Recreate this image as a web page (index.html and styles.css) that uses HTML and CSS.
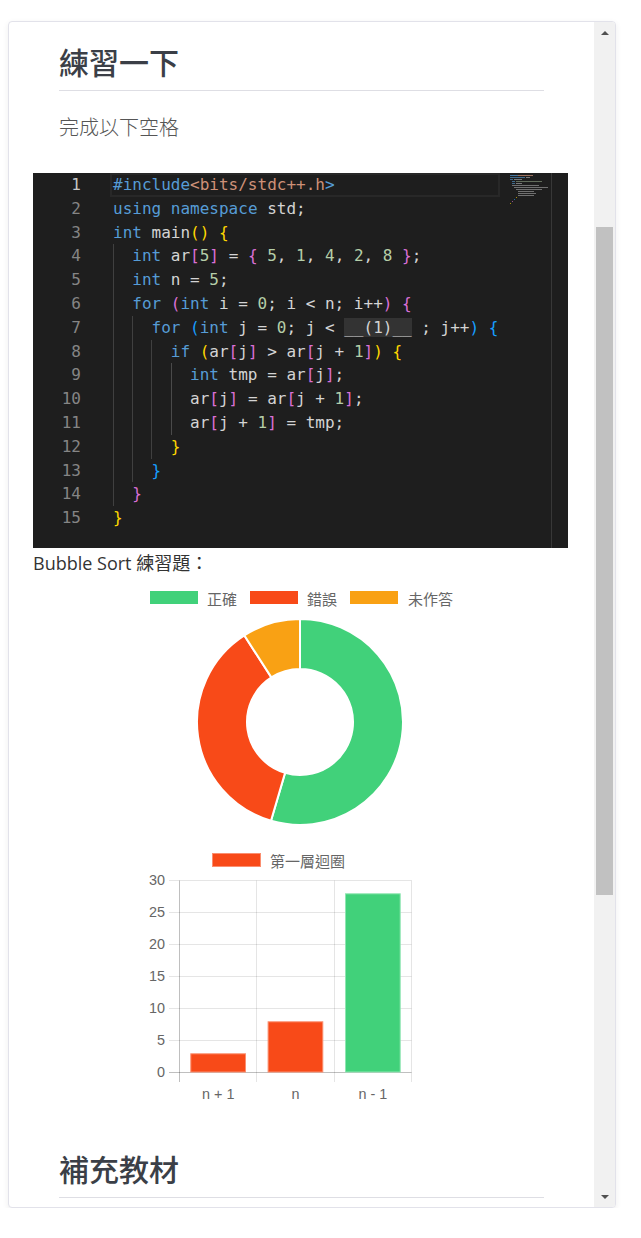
FILE: index.html
```html
<!DOCTYPE html>
<html lang="zh-Hant">
<head>
<meta charset="utf-8">
<title>練習一下</title>
<link rel="stylesheet" href="styles.css">
</head>
<body>
<div class="card">
  <section class="content">
    <h2 class="title">練習一下</h2>
    <p class="lead">完成以下空格</p>
    <div class="wide">
      <div class="editor">
        <div class="gutter">
          <div class="num active">1</div>
          <div class="num">2</div>
          <div class="num">3</div>
          <div class="num">4</div>
          <div class="num">5</div>
          <div class="num">6</div>
          <div class="num">7</div>
          <div class="num">8</div>
          <div class="num">9</div>
          <div class="num">10</div>
          <div class="num">11</div>
          <div class="num">12</div>
          <div class="num">13</div>
          <div class="num">14</div>
          <div class="num">15</div>
        </div>
        <div class="code">
          <div class="cur-line"></div>
          <div class="guide g1"></div>
          <div class="guide g2"></div>
          <div class="guide g3"></div>
          <div class="guide g4"></div>
          <div class="ln"><span class="k">#include</span><span class="s">&lt;bits/stdc++.h</span><span class="k">&gt;</span></div>
          <div class="ln"><span class="k">using</span> <span class="k">namespace</span> std;</div>
          <div class="ln"><span class="k">int</span> main<span class="b1">()</span> <span class="b1">{</span></div>
          <div class="ln">  <span class="k">int</span> ar<span class="b2">[</span><span class="n">5</span><span class="b2">]</span> = <span class="b2">{</span> <span class="n">5</span>, <span class="n">1</span>, <span class="n">4</span>, <span class="n">2</span>, <span class="n">8</span> <span class="b2">}</span>;</div>
          <div class="ln">  <span class="k">int</span> n = <span class="n">5</span>;</div>
          <div class="ln">  <span class="k">for</span> <span class="b2">(</span><span class="k">int</span> i = <span class="n">0</span>; i &lt; n; i++<span class="b2">)</span> <span class="b2">{</span></div>
          <div class="ln">    <span class="k">for</span> <span class="b3">(</span><span class="k">int</span> j = <span class="n">0</span>; j &lt; <span class="blank">__(1)__</span> ; j++<span class="b3">)</span> <span class="b3">{</span></div>
          <div class="ln">      <span class="k">if</span> <span class="b1">(</span>ar<span class="b2">[</span>j<span class="b2">]</span> &gt; ar<span class="b2">[</span>j + <span class="n">1</span><span class="b2">]</span><span class="b1">)</span> <span class="b1">{</span></div>
          <div class="ln">        <span class="k">int</span> tmp = ar<span class="b2">[</span>j<span class="b2">]</span>;</div>
          <div class="ln">        ar<span class="b2">[</span>j<span class="b2">]</span> = ar<span class="b2">[</span>j + <span class="n">1</span><span class="b2">]</span>;</div>
          <div class="ln">        ar<span class="b2">[</span>j + <span class="n">1</span><span class="b2">]</span> = tmp;</div>
          <div class="ln">      <span class="b1">}</span></div>
          <div class="ln">    <span class="b3">}</span></div>
          <div class="ln">  <span class="b2">}</span></div>
          <div class="ln"><span class="b1">}</span></div>
        </div>
        <svg class="minimap" width="40" height="34" viewBox="0 0 40 34">
          <rect x="0" y="1" width="8" height="1" fill="#569cd6" opacity=".7"/>
          <rect x="8" y="1" width="15" height="1" fill="#ce9178" opacity=".7"/>
          <rect x="0" y="3" width="15" height="1" fill="#569cd6" opacity=".6"/>
          <rect x="16" y="3" width="4" height="1" fill="#d4d4d4" opacity=".5"/>
          <rect x="0" y="5" width="3" height="1" fill="#569cd6" opacity=".6"/>
          <rect x="4" y="5" width="8" height="1" fill="#d4d4d4" opacity=".5"/>
          <rect x="2" y="7" width="3" height="1" fill="#569cd6" opacity=".6"/>
          <rect x="6" y="7" width="26" height="1" fill="#b5cea8" opacity=".45"/>
          <rect x="2" y="9" width="3" height="1" fill="#569cd6" opacity=".6"/>
          <rect x="6" y="9" width="6" height="1" fill="#d4d4d4" opacity=".5"/>
          <rect x="2" y="11" width="27" height="1" fill="#d4d4d4" opacity=".45"/>
          <rect x="4" y="13" width="34" height="1" fill="#d4d4d4" opacity=".45"/>
          <rect x="6" y="15" width="26" height="1" fill="#d4d4d4" opacity=".45"/>
          <rect x="8" y="17" width="16" height="1" fill="#d4d4d4" opacity=".45"/>
          <rect x="8" y="19" width="18" height="1" fill="#d4d4d4" opacity=".45"/>
          <rect x="8" y="21" width="16" height="1" fill="#d4d4d4" opacity=".45"/>
          <rect x="6" y="23" width="1" height="1" fill="#ffd700" opacity=".6"/>
          <rect x="4" y="25" width="1" height="1" fill="#179fff" opacity=".6"/>
          <rect x="2" y="27" width="1" height="1" fill="#da70d6" opacity=".6"/>
          <rect x="0" y="29" width="1" height="1" fill="#ffd700" opacity=".6"/>
        </svg>
        <div class="ruler"></div>
      </div>
      <p class="caption">Bubble Sort 練習題：</p>
      <svg class="chart" width="535" height="258" viewBox="0 0 535 258">
        <g class="legend">
          <rect x="117" y="13" width="48" height="13" fill="#41d17a"/>
          <text x="174" y="20">正確</text>
          <rect x="217" y="13" width="48" height="13" fill="#f84a18"/>
          <text x="274" y="20">錯誤</text>
          <rect x="317" y="13" width="48" height="13" fill="#f9a114"/>
          <text x="375" y="20">未作答</text>
        </g>
        <g stroke="#ffffff" stroke-width="2">
          <path fill="#41d17a" d="M267,41 A103,103 0 1 1 237.98,242.83 L252.07,194.85 A53,53 0 1 0 267,91 Z"/>
          <path fill="#f84a18" d="M237.98,242.83 A103,103 0 0 1 211.31,57.35 L238.35,99.41 A53,53 0 0 0 252.07,194.85 Z"/>
          <path fill="#f9a114" d="M211.31,57.35 A103,103 0 0 1 267,41 L267,91 A53,53 0 0 0 238.35,99.41 Z"/>
        </g>
      </svg>
      <svg class="chart" width="535" height="280" viewBox="0 0 535 280">
        <g class="legend">
          <rect x="179.5" y="17.5" width="48" height="13" fill="#f84a18" stroke="#fb8f70"/>
          <text x="237" y="24">第一層迴圈</text>
        </g>
        <g stroke="rgba(0,0,0,0.1)" stroke-width="1">
          <line x1="136" y1="44.5" x2="378.5" y2="44.5"/>
          <line x1="136" y1="76.5" x2="378.5" y2="76.5"/>
          <line x1="136" y1="108.5" x2="378.5" y2="108.5"/>
          <line x1="136" y1="140.5" x2="378.5" y2="140.5"/>
          <line x1="136" y1="172.5" x2="378.5" y2="172.5"/>
          <line x1="136" y1="204.5" x2="378.5" y2="204.5"/>
          <line x1="223.5" y1="44.5" x2="223.5" y2="246"/>
          <line x1="301.5" y1="44.5" x2="301.5" y2="246"/>
          <line x1="378.5" y1="44.5" x2="378.5" y2="246"/>
        </g>
        <g stroke="rgba(0,0,0,0.25)" stroke-width="1">
          <line x1="136" y1="236.5" x2="378.5" y2="236.5"/>
          <line x1="146.5" y1="44.5" x2="146.5" y2="246"/>
        </g>
        <rect x="157.8" y="217.8" width="54.7" height="18.2" fill="#f84a18" stroke="#fb8f70"/>
        <rect x="235.1" y="185.8" width="54.7" height="50.2" fill="#f84a18" stroke="#fb8f70"/>
        <rect x="312.5" y="57.8" width="54.7" height="178.2" fill="#41d17a" stroke="#8fe6b2"/>
        <g class="ticks" text-anchor="end">
          <text x="132" y="44">30</text>
          <text x="132" y="76">25</text>
          <text x="132" y="108">20</text>
          <text x="132" y="140">15</text>
          <text x="132" y="172">10</text>
          <text x="132" y="204">5</text>
          <text x="132" y="236">0</text>
        </g>
        <g class="ticks" text-anchor="middle">
          <text x="185.2" y="258">n + 1</text>
          <text x="262.5" y="258">n</text>
          <text x="339.8" y="258">n - 1</text>
        </g>
      </svg>
    </div>
    <h2 class="title second">補充教材</h2>
  </section>
  <div class="scrollbar">
    <div class="sb-btn"><span class="tri up"></span></div>
    <div class="sb-track"><div class="sb-thumb"></div></div>
    <div class="sb-btn"><span class="tri down"></span></div>
  </div>
</div>
</body>
</html>
```

FILE: styles.css
```css
* { box-sizing: border-box; }

html, body {
  margin: 0;
  padding: 0;
  background: #ffffff;
}

body {
  font-family: "Open Sans", "Noto Sans CJK TC", sans-serif;
  color: #333333;
}

.card {
  margin: 21px 0 0 8px;
  width: 608px;
  height: 1187px;
  border: 1px solid #e2e2ea;
  border-radius: 4px;
  box-shadow: 0 2px 6px rgba(0, 0, 0, 0.07);
  background: #ffffff;
  display: flex;
  overflow: hidden;
}

.content {
  flex: 1;
  min-width: 0;
  padding: 21px 50px 0;
  overflow: hidden;
}

.title {
  margin: 0;
  padding-bottom: 11px;
  border-bottom: 1px solid #dedee4;
  font-family: "Noto Sans CJK TC", "Noto Sans CJK SC", sans-serif;
  font-size: 30px;
  line-height: 36px;
  font-weight: 500;
  color: #3b3f47;
}

.title.second {
  margin-top: 34px;
}

.lead {
  margin: 21px 0 0;
  font-family: "Noto Sans CJK TC", sans-serif;
  font-size: 20px;
  line-height: 30px;
  font-weight: 300;
  color: #555555;
}

.wide {
  margin: 31px 0 0 -26px;
  width: 535px;
}

/* ---------- code editor ---------- */
.editor {
  position: relative;
  display: flex;
  height: 375px;
  background: #1e1e1e;
  font-family: "DejaVu Sans Mono", "Liberation Mono", monospace;
  font-size: 16px;
  line-height: 23.8px;
  color: #d4d4d4;
}

.gutter {
  width: 48px;
  text-align: right;
  color: #858585;
}

.num.active { color: #c6c6c6; }

.code {
  position: relative;
  margin-left: 32px;
  flex: 1;
}

.ln { white-space: pre; position: relative; }

.k { color: #569cd6; }
.s { color: #ce9178; }
.n { color: #b5cea8; }
.b1 { color: #ffd700; }
.b2 { color: #da70d6; }
.b3 { color: #179fff; }
.blank { background: #333333; }

.cur-line {
  position: absolute;
  left: -3px;
  top: 0;
  width: 390px;
  height: 24px;
  border: 2px solid #282828;
}

.guide {
  position: absolute;
  width: 1px;
  background: #404040;
}
.g1 { left: 0; top: 71.4px; height: 261.8px; }
.g2 { left: 19.2px; top: 142.8px; height: 166.6px; }
.g3 { left: 38.4px; top: 166.6px; height: 119px; }
.g4 { left: 57.6px; top: 190.4px; height: 71.4px; background: #4a4a4a; }

.minimap {
  position: absolute;
  left: 477px;
  top: 1px;
}

.ruler {
  position: absolute;
  left: 518px;
  top: 0;
  width: 1px;
  height: 100%;
  background: #383838;
}

/* ---------- charts ---------- */
.caption {
  margin: 0;
  font-size: 18px;
  line-height: 30px;
  color: #333333;
}

.chart {
  display: block;
}

.legend text {
  font-family: "Noto Sans CJK TC", sans-serif;
  font-size: 15px;
  fill: #666666;
  dominant-baseline: central;
}

.ticks text {
  font-family: "Liberation Sans", "Noto Sans CJK TC", sans-serif;
  font-size: 14.4px;
  fill: #666666;
  dominant-baseline: central;
}

/* ---------- fake scrollbar ---------- */
.scrollbar {
  width: 21px;
  flex: none;
  background: #f1f1f1;
  display: flex;
  flex-direction: column;
}

.sb-btn {
  height: 21px;
  display: flex;
  align-items: center;
  justify-content: center;
}

.tri {
  width: 0;
  height: 0;
  border-left: 4px solid transparent;
  border-right: 4px solid transparent;
}
.tri.up { border-bottom: 4px solid #505050; }
.tri.down { border-top: 4px solid #505050; }

.sb-track {
  flex: 1;
  padding: 0 2px;
}

.sb-thumb {
  margin-top: 184px;
  height: 668px;
  background: #c1c1c1;
}
```
